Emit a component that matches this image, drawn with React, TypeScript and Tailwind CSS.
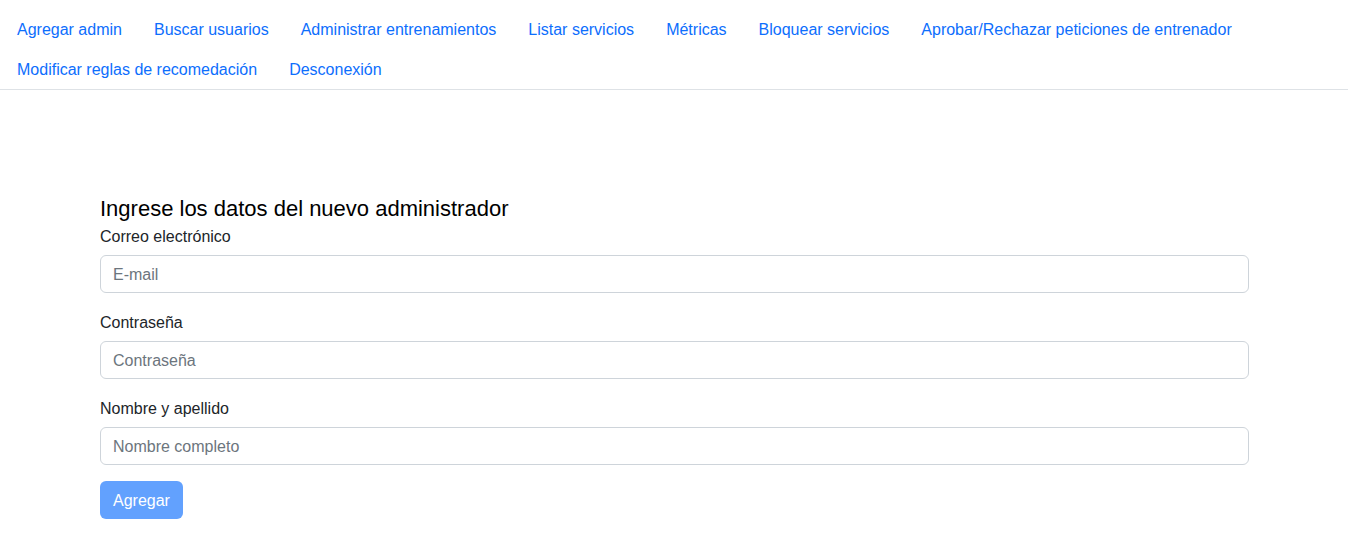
const links = [
	"Agregar admin",
	"Buscar usuarios",
	"Administrar entrenamientos",
	"Listar servicios",
	"Métricas",
	"Bloquear servicios",
	"Aprobar/Rechazar peticiones de entrenador",
	"Modificar reglas de recomedación",
	"Desconexión",
];

const fields = [
	{ label: "Correo electrónico", placeholder: "E-mail", type: "email" },
	{ label: "Contraseña", placeholder: "Contraseña", type: "password" },
	{ label: "Nombre y apellido", placeholder: "Nombre completo", type: "text" },
];

export default function App() {
	return (
		<div className="min-h-[545px] bg-white text-[#212529] font-['Liberation_Sans',Arial,sans-serif]">
			<nav className="border-b border-[#dee2e6] pt-[9px] pl-[1px]">
				<ul className="flex flex-wrap pr-[80px]">
					{links.map((l) => (
						<li key={l}>
							<a href="#!" className="block px-4 pt-[9px] pb-[7px] text-base leading-6 text-[#0d6efd]">
								{l}
							</a>
						</li>
					))}
				</ul>
			</nav>

			<main className="mx-[100px] w-[1149px] pt-[107px]">
				<h5 className="text-[22px] leading-6 font-normal text-black">
					Ingrese los datos del nuevo administrador
				</h5>
				<form className="mt-[2px]" onSubmit={(e) => e.preventDefault()}>
					{fields.map((f) => (
						<div key={f.label} className="mb-4">
							<label className="block text-base leading-6 pt-[2px] mb-[6px]">{f.label}</label>
							<input
								type={f.type}
								placeholder={f.placeholder}
								className="block w-full h-[38px] px-3 pt-[2px] rounded-md border border-[#ced4da] text-base placeholder:text-[#6c757d] outline-none"
							/>
						</div>
					))}
					<button
						type="submit"
						disabled
						className="h-[38px] px-[13px] pt-[2px] rounded-md bg-[#62a1fe] text-white text-base leading-6"
					>
						Agregar
					</button>
				</form>
			</main>
		</div>
	);
}
